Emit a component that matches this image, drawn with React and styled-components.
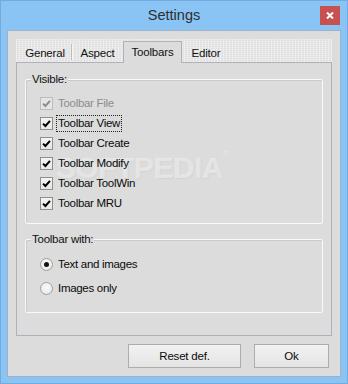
import React from "react";
import styled, { createGlobalStyle } from "styled-components";

const GlobalStyle = createGlobalStyle`
  html, body { margin: 0; padding: 0; background: #8ac4f5; }
  body { font-family: "Liberation Sans", Arial, sans-serif; }
  * { box-sizing: border-box; }
`;

const Window = styled.div`
  width: 348px;
  height: 384px;
  background: #8ac4f5;
  border: 1px solid #72abe0;
  display: flex;
  flex-direction: column;
`;

const TitleBar = styled.div`
  height: 29px;
  display: grid;
  grid-template-columns: 1fr auto 1fr;
  align-items: start;
`;

const Title = styled.div`
  grid-column: 2;
  margin-top: 6px;
  font-size: 14.5px;
  line-height: 17px;
  color: #2e2e2e;
`;

const CloseButton = styled.div`
  grid-column: 3;
  justify-self: end;
  margin: 5px 7px 0 0;
  width: 20px;
  height: 19px;
  background: #c75050;
  display: flex;
  align-items: center;
  justify-content: center;
`;

const Client = styled.div`
  flex: 1;
  margin: 0 6px 6px 6px;
  border: 1px solid #9fb3c8;
  background: #dcdcdc;
  padding: 8px 8px 8px 8px;
  display: flex;
  flex-direction: column;
`;

const TabStrip = styled.div`
  height: 23px;
  display: flex;
  align-items: flex-end;
  padding-left: 2px;
  background-color: #e1e1e1;
  background-image: repeating-linear-gradient(
      90deg,
      rgba(255, 255, 255, 0.35) 0 1px,
      transparent 1px 3px
    ),
    repeating-linear-gradient(0deg, rgba(255, 255, 255, 0.2) 0 1px, transparent 1px 2px);
  position: relative;
  z-index: 1;
`;

const Tab = styled.div`
  width: ${(p) => p.$w}px;
  display: flex;
  align-items: center;
  justify-content: center;
  font-size: 11.5px;
  letter-spacing: -0.2px;
  color: #111;
  background: ${(p) => (p.$active ? "#dcdcdc" : "transparent")};
  border: ${(p) => (p.$active ? "1px solid #b1b1bb" : "none")};
  border-bottom: none;
  margin-bottom: ${(p) => (p.$active ? "-1px" : "0")};
  height: ${(p) => (p.$active ? 22 : 19)}px;
  padding-bottom: ${(p) => (p.$active ? 2 : 0)}px;
  position: relative;
  ${(p) =>
    p.$sep &&
    `
    &::after {
      content: "";
      position: absolute;
      right: 0;
      top: 1px;
      bottom: 2px;
      width: 1px;
      background: #bdbdbd;
      box-shadow: 1px 0 0 #f4f4f4;
    }
  `}
`;

const Panel = styled.div`
  flex: 1;
  border: 1px solid #b1b1bb;
  background: #dcdcdc;
  padding: 16px 8px 0 8px;
  display: flex;
  flex-direction: column;
  gap: 15px;
`;

const Group = styled.div`
  position: relative;
  border: 1px solid #f9f9f9;
  box-shadow: inset 1px 1px 0 #c9c9c9;
  border-radius: 2px;
  padding: ${(p) => p.$pad};
  display: flex;
  flex-direction: column;
  gap: ${(p) => p.$gap}px;
`;

const Legend = styled.div`
  position: absolute;
  top: -8px;
  left: 5px;
  padding: 0 1px;
  background: #dcdcdc;
  font-size: 11.5px;
  line-height: 14px;
  color: #111;
  letter-spacing: -0.25px;
`;

const Row = styled.label`
  position: relative;
  z-index: 1;
  height: 20px;
  display: flex;
  align-items: center;
  gap: 3px;
  font-size: 11.5px;
  letter-spacing: -0.3px;
  color: ${(p) => (p.$disabled ? "#8d8d8d" : "#0a0a0a")};
`;

const Caption = styled.span`
  padding: 1px 1px;
  line-height: 13px;
  border: 1px dotted ${(p) => (p.$focus ? "#222" : "transparent")};
`;

const Box = styled.span`
  width: 13px;
  height: 13px;
  border: 1px solid ${(p) => (p.$disabled ? "#bcbcbc" : "#8e8f8f")};
  background: ${(p) =>
    p.$disabled ? "#e6e6e6" : "linear-gradient(#f4f4f4, #e8e8e8)"};
  display: flex;
  align-items: center;
  justify-content: center;
`;

const Radio = styled.span`
  width: 13px;
  height: 13px;
  border-radius: 50%;
  border: 1px solid #a0a0a0;
  background: radial-gradient(circle at 50% 40%, #fafafa, #e4e4e4);
  display: flex;
  align-items: center;
  justify-content: center;
`;

const Dot = styled.span`
  width: 5px;
  height: 5px;
  border-radius: 50%;
  background: #111;
`;

const Watermark = styled.div`
  position: absolute;
  left: 30px;
  top: 71px;
  font-size: 30px;
  font-weight: bold;
  letter-spacing: -0.5px;
  color: rgba(255, 255, 255, 0.4);
  text-shadow: 1px 1px 1px rgba(0, 0, 0, 0.04);
  pointer-events: none;
  z-index: 0;
  sup {
    font-size: 9px;
    vertical-align: top;
    position: relative;
    top: -2px;
  }
`;

const ButtonBar = styled.div`
  display: flex;
  justify-content: flex-end;
  gap: 13px;
  padding: 8px 3px 0 0;
`;

const Button = styled.div`
  width: ${(p) => p.$w}px;
  height: 24px;
  border: 1px solid #acacac;
  background: linear-gradient(#f2f2f2, #e4e4e4);
  display: flex;
  align-items: center;
  justify-content: center;
  font-size: 11.5px;
  letter-spacing: -0.2px;
  color: #0a0a0a;
`;

const Check = ({ color }) => (
  <svg width="9" height="9" viewBox="0 0 9 9">
    <path d="M1 4.6 L3.4 7 L8 1.8" fill="none" stroke={color} strokeWidth="2" />
  </svg>
);

const checks = [
  { t: "Toolbar File", disabled: true },
  { t: "Toolbar View", focus: true },
  { t: "Toolbar Create" },
  { t: "Toolbar Modify" },
  { t: "Toolbar ToolWin" },
  { t: "Toolbar MRU" },
];

export default function App() {
  return (
    <>
      <GlobalStyle />
      <Window>
        <TitleBar>
          <Title>Settings</Title>
          <CloseButton>
            <svg width="8" height="7" viewBox="0 0 8 7">
              <path d="M1 0.5 L7 6.5 M7 0.5 L1 6.5" stroke="#fff" strokeWidth="2" />
            </svg>
          </CloseButton>
        </TitleBar>
        <Client>
          <TabStrip>
            <Tab $w={54} $sep>General</Tab>
            <Tab $w={51}>Aspect</Tab>
            <Tab $w={59} $active>Toolbars</Tab>
            <Tab $w={48}>Editor</Tab>
          </TabStrip>
          <Panel>
            <Group $pad="13px 0 10px 14px" $gap={0}>
              <Legend>Visible:</Legend>
              <Watermark>
                SOFTPEDIA<sup>®</sup>
              </Watermark>
              {checks.map((c) => (
                <Row key={c.t} $disabled={c.disabled}>
                  <Box $disabled={c.disabled}>
                    <Check color={c.disabled ? "#8d8d8d" : "#000"} />
                  </Box>
                  <Caption $focus={c.focus}>{c.t}</Caption>
                </Row>
              ))}
            </Group>
            <Group $pad="14px 0 14px 14px" $gap={4}>
              <Legend>Toolbar with:</Legend>
              <Row>
                <Radio>
                  <Dot />
                </Radio>
                <Caption>Text and images</Caption>
              </Row>
              <Row>
                <Radio />
                <Caption>Images only</Caption>
              </Row>
            </Group>
          </Panel>
          <ButtonBar>
            <Button $w={113}>Reset def.</Button>
            <Button $w={75}>Ok</Button>
          </ButtonBar>
        </Client>
      </Window>
    </>
  );
}
